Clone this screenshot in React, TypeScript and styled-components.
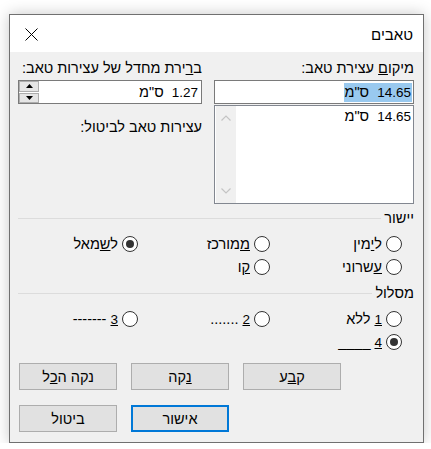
import styled, { createGlobalStyle } from 'styled-components'

const GlobalStyle = createGlobalStyle`
    html, body {
        margin: 0;
        padding: 0;
        background: #ffffff;
    }

    body {
        font-family: "Liberation Sans", "DejaVu Sans", sans-serif;
        font-size: 14.5px;
        color: #000000;
    }
`

// digits render narrower than the hebrew text in the original dialog
const Num = styled.span`
    font-size: 13.5px;
`

interface IRadioOption {
    label: React.ReactNode
    checked?: boolean
}

const alignRows: IRadioOption[][] = [
    [
        { label: <>ל<u>י</u>מין</> },
        { label: <><u>מ</u>מורכז</> },
        { label: <>ל<u>ש</u>מאל</>, checked: true },
    ],
    [
        { label: <><u>ע</u>שרוני</> },
        { label: <><u>ק</u>ו</> },
    ],
]

const leaderRows: IRadioOption[][] = [
    [
        { label: <><Num><u>1</u></Num> ללא</> },
        { label: <><Num><u>2</u></Num> .......</> },
        { label: <><Num><u>3</u></Num> -------</> },
    ],
    [
        { label: <><Num><u>4</u></Num> ____</>, checked: true },
    ],
]

const RadioGroup: React.FC<{ rows: IRadioOption[][] }> = ({ rows }) => (
    <RadioGrid>
        {rows.flatMap((row, r) =>
            [0, 1, 2].map(c => {
                const option = row[c]
                if (!option) return <span key={`${r}-${c}`} />
                return (
                    <RadioItem key={`${r}-${c}`}>
                        <RadioCircle checked={Boolean(option.checked)} />
                        <span>{option.label}</span>
                    </RadioItem>
                )
            })
        )}
    </RadioGrid>
)

const Measure: React.FC<{ value: string }> = ({ value }) => (
    <>
        <Num>{value}</Num>{'  '}ס"מ
    </>
)

const App: React.FC = () => {
    return (
        <>
            <GlobalStyle />
            <Dialog dir="rtl">
                <TitleBar>
                    <Title>טאבים</Title>
                    <CloseButton>
                        <svg width="13" height="13" viewBox="0 0 13 13">
                            <path d="M0.5 0.5 L12.5 12.5 M12.5 0.5 L0.5 12.5" stroke="#000" strokeWidth="1" fill="none" />
                        </svg>
                    </CloseButton>
                </TitleBar>
                <Body>
                    <TopGrid>
                        <Column>
                            <FieldLabel>מיקו<u>ם</u> עצירת טאב:</FieldLabel>
                            <TextInput>
                                <Selected><Measure value="14.65" /></Selected>
                            </TextInput>
                            <TabList>
                                <ListItems>
                                    <ListItem><Measure value="14.65" /></ListItem>
                                </ListItems>
                                <ScrollBar>
                                    <svg width="10" height="6" viewBox="0 0 10 6">
                                        <path d="M0.5 5.5 L5 1 L9.5 5.5" stroke="#c4c4c4" strokeWidth="1.2" fill="none" />
                                    </svg>
                                    <svg width="10" height="6" viewBox="0 0 10 6">
                                        <path d="M0.5 0.5 L5 5 L9.5 0.5" stroke="#c4c4c4" strokeWidth="1.2" fill="none" />
                                    </svg>
                                </ScrollBar>
                            </TabList>
                        </Column>
                        <Column>
                            <FieldLabel>ב<u>ר</u>ירת מחדל של עצירות טאב:</FieldLabel>
                            <SpinBox>
                                <SpinValue><Measure value="1.27" /></SpinValue>
                                <SpinButtons>
                                    <SpinButton>
                                        <svg width="7" height="4" viewBox="0 0 7 4">
                                            <path d="M3.5 0 L7 4 L0 4 Z" fill="#000" />
                                        </svg>
                                    </SpinButton>
                                    <SpinButton>
                                        <svg width="7" height="4" viewBox="0 0 7 4">
                                            <path d="M0 0 L7 0 L3.5 4 Z" fill="#000" />
                                        </svg>
                                    </SpinButton>
                                </SpinButtons>
                            </SpinBox>
                            <Note>עצירות טאב לביטול:</Note>
                        </Column>
                    </TopGrid>

                    <Legend top={5}>
                        <span>יישור</span>
                        <Rule />
                    </Legend>
                    <RadioGroup rows={alignRows} />

                    <Legend top={6}>
                        <span>מסלול</span>
                        <Rule />
                    </Legend>
                    <RadioGroup rows={leaderRows} />

                    <ButtonRow top={10}>
                        <Button>ק<u>ב</u>ע</Button>
                        <Button><u>נ</u>קה</Button>
                        <Button>נקה ה<u>כ</u>ל</Button>
                    </ButtonRow>
                    <ButtonRow top={15}>
                        <Button primary>אישור</Button>
                        <Button>ביטול</Button>
                    </ButtonRow>
                </Body>
            </Dialog>
        </>
    )
}

const Dialog = styled.div`
    box-sizing: border-box;
    width: 415px;
    height: 429px;
    margin: 14px 0 0 9px;
    border: 1px solid #707070;
    background: #f0f0f0;
    box-shadow: 0 0 14px rgba(0, 0, 0, 0.22);
    display: flex;
    flex-direction: column;
`

const TitleBar = styled.div`
    height: 37px;
    background: #ffffff;
    display: flex;
    align-items: center;
    justify-content: space-between;
    padding: 0 10px 0 15px;
`

const Title = styled.div`
    font-size: 15px;
    padding-top: 1px;
`

const CloseButton = styled.div`
    display: flex;
    align-items: center;
    height: 13px;
    margin-top: 1px;
`

const Body = styled.div`
    flex: 1;
    padding: 8px 9px 0 8px;
    display: flex;
    flex-direction: column;
`

const TopGrid = styled.div`
    display: grid;
    grid-template-columns: 200px 184px;
    justify-content: space-between;
`

const Column = styled.div`
    display: flex;
    flex-direction: column;
`

const FieldLabel = styled.div`
    height: 17px;
    line-height: 17px;
    margin-bottom: 3px;
    white-space: nowrap;
`

const TextInput = styled.div`
    box-sizing: border-box;
    height: 24px;
    border: 1px solid #7a7a7a;
    background: #ffffff;
    display: flex;
    align-items: center;
    padding: 0 1px;
`

const Selected = styled.span`
    background: #99c9ef;
    white-space: pre;
    line-height: 19px;
    padding: 0 1px;
`

const TabList = styled.div`
    box-sizing: border-box;
    height: 99px;
    margin-top: 1px;
    border: 1px solid #828790;
    background: #ffffff;
    display: flex;
    padding: 0 0 0 1px;
`

const ListItems = styled.div`
    flex: 1;
    padding: 2px 2px 0 0;
`

const ListItem = styled.div`
    white-space: pre;
    line-height: 17px;
`

const ScrollBar = styled.div`
    width: 20px;
    background: #f0f0f0;
    display: flex;
    flex-direction: column;
    align-items: center;
    justify-content: space-between;
    padding: 9px 0 9px;
`

const SpinBox = styled.div`
    box-sizing: border-box;
    height: 24px;
    border: 1px solid #7a7a7a;
    background: #ffffff;
    display: flex;
    align-items: center;
`

const SpinValue = styled.div`
    flex: 1;
    white-space: pre;
    padding-right: 3px;
`

const SpinButtons = styled.div`
    align-self: stretch;
    display: flex;
    flex-direction: column;
    gap: 1px;
    width: 20px;
`

const SpinButton = styled.div`
    flex: 1;
    box-sizing: border-box;
    background: #e5e5e5;
    border: 1px solid #adadad;
    display: flex;
    align-items: center;
    justify-content: center;
`

const Note = styled.div`
    margin-top: 15px;
    line-height: 17px;
`

const Legend = styled.div<{ top: number }>`
    display: flex;
    align-items: center;
    gap: 3px;
    height: 17px;
    margin-top: ${({ top }) => top}px;
`

const Rule = styled.div`
    flex: 1;
    height: 1px;
    background: #dcdcdc;
    margin-top: 1px;
`

const RadioGrid = styled.div`
    display: grid;
    grid-template-columns: 132px 132px 1fr;
    grid-auto-rows: 23px;
    padding-right: 12px;
    margin-top: 6px;
`

const RadioItem = styled.label`
    display: flex;
    align-items: center;
    gap: 4px;
    white-space: pre;
`

const RadioCircle = styled.span<{ checked: boolean }>`
    box-sizing: border-box;
    width: 16px;
    height: 16px;
    border-radius: 50%;
    border: 1px solid #333333;
    background: #ffffff;
    display: flex;
    align-items: center;
    justify-content: center;
    flex-shrink: 0;

    &::after {
        content: "";
        width: 8px;
        height: 8px;
        border-radius: 50%;
        background: ${({ checked }) => checked ? '#333333' : 'transparent'};
    }
`

const ButtonRow = styled.div<{ top: number }>`
    display: flex;
    justify-content: flex-end;
    gap: 14px;
    padding-left: 1px;
    margin-top: ${({ top }) => top}px;
`

const Button = styled.div<{ primary?: boolean }>`
    box-sizing: border-box;
    width: 98px;
    height: 27px;
    background: #e1e1e1;
    border: ${({ primary }) => primary ? '2px solid #0078d7' : '1px solid #adadad'};
    display: flex;
    align-items: center;
    justify-content: center;
`

export default App
